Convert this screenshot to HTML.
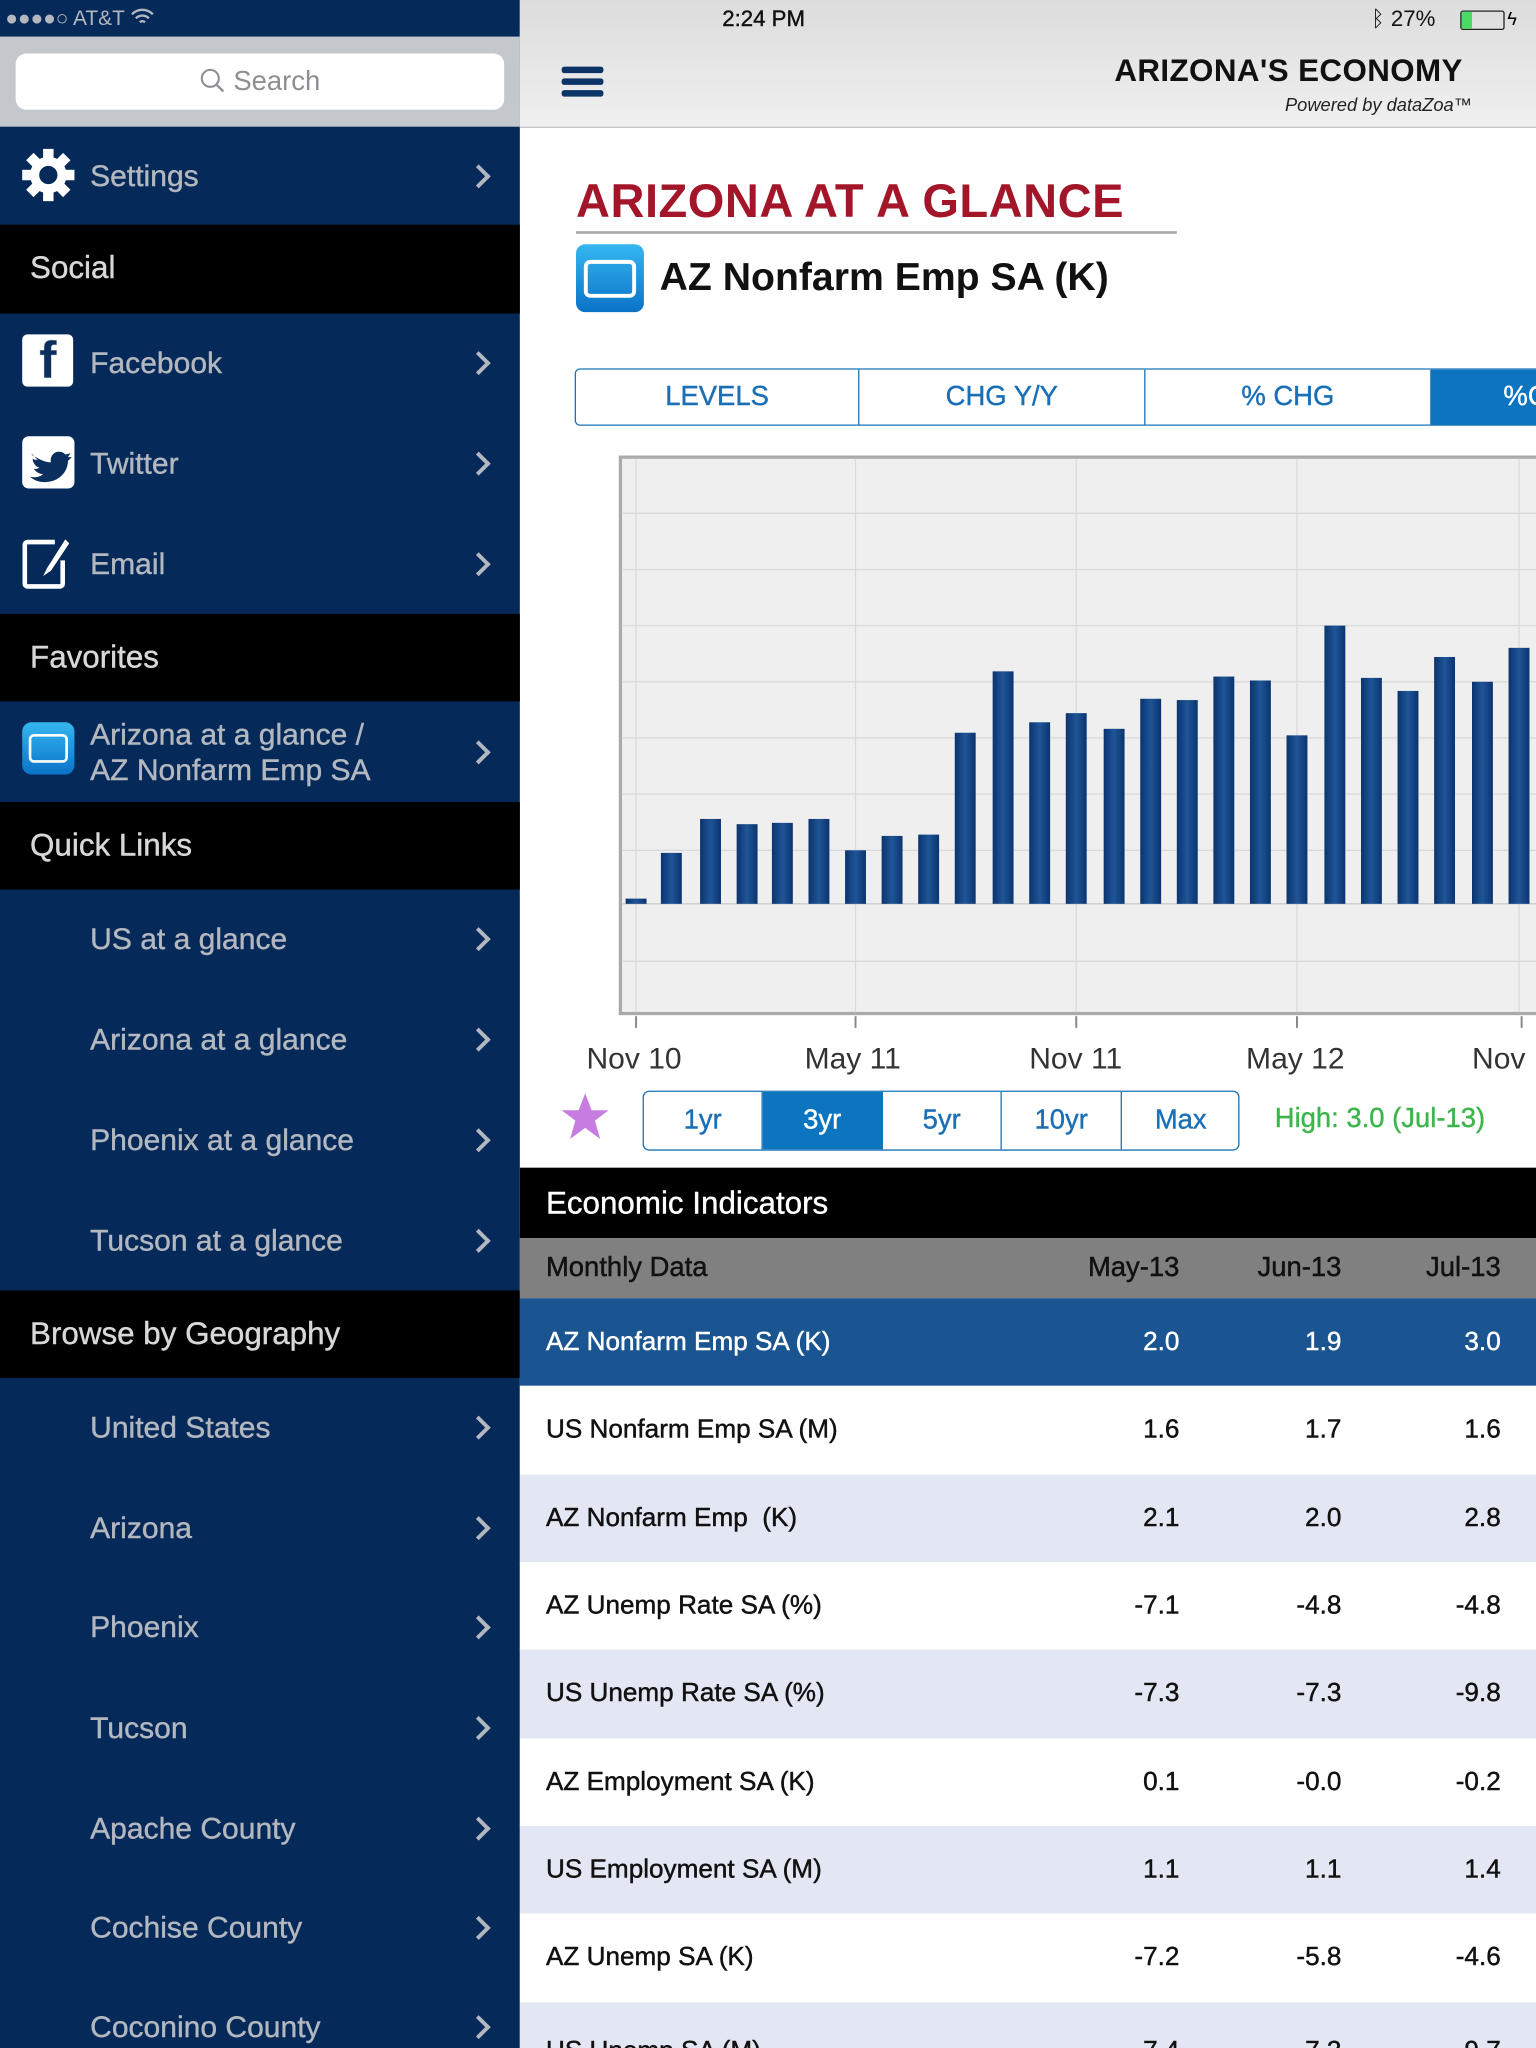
<!DOCTYPE html>
<html><head><meta charset="utf-8"><style>
*{margin:0;padding:0;box-sizing:border-box}
html,body{width:1536px;height:2048px;overflow:hidden;background:#fff}
#w{position:absolute;left:0;top:0;width:1176px;height:1568px;transform:scale(1.306122);transform-origin:0 0;font-family:"Liberation Sans",Arial,sans-serif;overflow:hidden}
.a{position:absolute}
#left{left:0;top:0;width:398px;height:1568px;background:#052a59}
.row{position:absolute;left:0;width:398px;color:#b3b7bf;font-size:23px;-webkit-text-stroke:0.3px #b3b7bf}
.row .t{position:absolute;left:69px;top:50%;transform:translateY(-50%)}
.row .c{position:absolute;left:360px;top:50%;width:13px;height:13px;border-right:3px solid #b3b7bf;border-top:3px solid #b3b7bf;transform:translateY(-50%) rotate(45deg)}
.hd{position:absolute;left:0;width:398px;background:#000;color:#d8d8d8;font-size:24px;-webkit-text-stroke:0.3px #d8d8d8}
.hd span{position:absolute;left:23px;top:50%;transform:translateY(-50%)}
.tr{position:absolute;left:398px;width:778px;height:68px;font-size:20px;color:#111;-webkit-text-stroke:0.35px currentColor}
.tr span{position:absolute;top:50%;transform:translateY(-50%)}
.tr .n{left:20px}.tr .v1{right:273px}.tr .v2{right:149px}.tr .v3{right:27px}
.seg{position:absolute;top:0;height:100%;display:flex;align-items:center;justify-content:center;color:#1a6fb5;font-size:21px;border-right:1.5px solid #1a73b8;-webkit-text-stroke:0.3px currentColor}
</style></head><body><div id="w">
<div id="left" class="a">
 <div class="a" style="left:0;top:0;width:398px;height:28px;color:#b3b7bf;font-size:16px;padding:6px 0 0 4px">●●●●○ AT&amp;T <svg width="18" height="14" viewBox="0 0 18 14" style="vertical-align:-1px"><path d="M1 5a11 11 0 0 1 16 0M4 8a7 7 0 0 1 10 0M7 11a3 3 0 0 1 4 0" fill="none" stroke="#b3b7bf" stroke-width="1.8"/></svg></div>
 <div class="a" style="left:0;top:28px;width:398px;height:69px;background:#c4c7cc"></div>
 <div class="a" style="left:12px;top:41px;width:374px;height:43px;background:#fff;border-radius:8px;color:#8e8e93;font-size:21px;text-align:center;line-height:43px"><svg width="20" height="20" viewBox="0 0 20 20" style="vertical-align:-3px"><circle cx="8" cy="8" r="6.5" fill="none" stroke="#8e8e93" stroke-width="1.6"/><path d="M13 13l5 5" stroke="#8e8e93" stroke-width="1.8"/></svg> Search</div>

 <div class="row" style="top:97px;height:75px"><svg class="a" style="left:16px;top:16px" width="42" height="42" viewBox="0 0 42 42"><g fill="#fff"><circle cx="21" cy="21" r="14"/><rect x="17" y="1" width="8" height="40"/><rect x="1" y="17" width="40" height="8"/><rect x="17" y="1" width="8" height="40" transform="rotate(45 21 21)"/><rect x="17" y="1" width="8" height="40" transform="rotate(-45 21 21)"/></g><circle cx="21" cy="21" r="7" fill="#052a59"/></svg><span class="t">Settings</span><i class="c"></i></div>
 <div class="hd" style="top:172px;height:68px"><span>Social</span></div>
 <div class="row" style="top:240px;height:76px"><div class="a" style="left:17px;top:16px;width:39px;height:40px;background:#fff;border-radius:4px;overflow:hidden"><span class="a" style="left:13px;top:-2px;font:bold 40px 'Liberation Sans';color:#0a2e5e">f</span></div><span class="t">Facebook</span><i class="c"></i></div>
 <div class="row" style="top:316px;height:77px"><div class="a" style="left:17px;top:18px;width:40px;height:40px;background:#fff;border-radius:5px"><svg width="40" height="40" viewBox="0 0 40 40"><path d="M7 14c6 4 11 6 15 6-1-5 3-9 7-8 2 0 3 1 4 2l4-1-2 3 3 0-3 3c0 9-8 17-19 16-4 0-8-2-10-4 4 1 8 0 10-2-3 0-6-2-7-4 2 0 3 0 4-1-3-1-5-4-5-7 1 1 2 1 4 1-3-2-4-5-5-4z" fill="#0a2e5e"/></svg></div><span class="t">Twitter</span><i class="c"></i></div>
 <div class="row" style="top:393px;height:77px"><svg class="a" style="left:16px;top:16px" width="42" height="42" viewBox="0 0 42 42"><path d="M26 6H5a2 2 0 0 0-2 2v30a2 2 0 0 0 2 2h25a2 2 0 0 0 2-2V20" fill="none" stroke="#fff" stroke-width="3.5"/><path d="M34 4l-14 22-3 6 6-4 14-21z" fill="#fff"/></svg><span class="t">Email</span><i class="c"></i></div>
 <div class="hd" style="top:470px;height:67px"><span>Favorites</span></div>
 <div class="row" style="top:537px;height:77px;line-height:27px"><div class="a" style="left:17px;top:16px;width:40px;height:40px;border-radius:7px;background:linear-gradient(#35b7f0,#0a72c8)"><div class="a" style="left:5px;top:9px;width:30px;height:22px;border:2.5px solid #fff;border-radius:4px"></div></div><span class="t">Arizona at a glance /<br>AZ Nonfarm Emp SA</span><i class="c"></i></div>
 <div class="hd" style="top:614px;height:67px"><span>Quick Links</span></div>
 <div class="row" style="top:681px;height:76px"><span class="t">US at a glance</span><i class="c"></i></div>
 <div class="row" style="top:757px;height:77px"><span class="t">Arizona at a glance</span><i class="c"></i></div>
 <div class="row" style="top:834px;height:77px"><span class="t">Phoenix at a glance</span><i class="c"></i></div>
 <div class="row" style="top:911px;height:77px"><span class="t">Tucson at a glance</span><i class="c"></i></div>
 <div class="hd" style="top:988px;height:67px"><span>Browse by Geography</span></div>
 <div class="row" style="top:1055px;height:76px"><span class="t">United States</span><i class="c"></i></div>
 <div class="row" style="top:1131px;height:77px"><span class="t">Arizona</span><i class="c"></i></div>
 <div class="row" style="top:1208px;height:76px"><span class="t">Phoenix</span><i class="c"></i></div>
 <div class="row" style="top:1284px;height:77px"><span class="t">Tucson</span><i class="c"></i></div>
 <div class="row" style="top:1361px;height:77px"><span class="t">Apache County</span><i class="c"></i></div>
 <div class="row" style="top:1438px;height:76px"><span class="t">Cochise County</span><i class="c"></i></div>
 <div class="row" style="top:1514px;height:76px"><span class="t">Coconino County</span><i class="c"></i></div>
</div>

<!-- header -->
<div class="a" style="left:398px;top:0;width:778px;height:98px;background:linear-gradient(#dcdcdc,#f0f0f0);border-bottom:1.5px solid #c4c4c4"></div>
<div class="a" style="left:553px;top:5px;font-size:17px;color:#111;-webkit-text-stroke:0.3px #111">2:24 PM</div>
<div class="a" style="left:1050px;top:5px;font-size:17px;color:#111">ᛒ 27%</div>
<div class="a" style="left:1118px;top:8px;width:34px;height:15px;border:1.5px solid #222;border-radius:2px"><div style="width:8px;height:100%;background:#4cd964"></div></div>
<div class="a" style="left:1154px;top:6px;font-size:14px">ϟ</div>
<div class="a" style="left:430px;top:51px;width:32px;height:5px;background:#0d3466;border-radius:2px"></div>
<div class="a" style="left:430px;top:60px;width:32px;height:5px;background:#0d3466;border-radius:2px"></div>
<div class="a" style="left:430px;top:69px;width:32px;height:5px;background:#0d3466;border-radius:2px"></div>
<div class="a" style="right:56px;top:41px;font-size:24px;font-weight:bold;color:#111;letter-spacing:0.3px">ARIZONA'S ECONOMY</div>
<div class="a" style="right:49px;top:72px;font-size:14px;font-style:italic;color:#222">Powered by dataZoa™</div>

<div class="a" style="left:441px;top:133px;font-size:36px;font-weight:bold;color:#a3162a;letter-spacing:0.4px">ARIZONA AT A GLANCE</div>
<div class="a" style="left:441px;top:177px;width:460px;height:2px;background:#aaa"></div>
<div class="a" style="left:441px;top:187px;width:52px;height:52px;border-radius:7px;background:linear-gradient(#35b7f0,#0a72c8)"><div class="a" style="left:6px;top:12px;width:40px;height:29px;border:3px solid #fff;border-radius:5px"></div></div>
<div class="a" style="left:505px;top:196px;font-size:30px;font-weight:bold;color:#111">AZ Nonfarm Emp SA (K)</div>

<div class="a" style="left:440px;top:282px;width:760px;height:44px;border:1.5px solid #1a73b8;border-radius:4px;overflow:hidden">
 <div class="seg" style="left:0;width:217px">LEVELS</div>
 <div class="seg" style="left:217px;width:219px">CHG Y/Y</div>
 <div class="seg" style="left:436px;width:219px">% CHG</div>
 <div class="seg" style="left:655px;width:120px;background:#0d75c0;color:#fff;justify-content:flex-start;padding-left:55px">%CHG</div>
</div>

<svg class="a" style="left:472px;top:348px" width="704" height="442" viewBox="472 348 704 442">
 <rect x="475" y="350" width="710" height="426" fill="#efefef" stroke="#aaa" stroke-width="2.5"/>
 <g stroke="#dadada" stroke-width="1">
  <line x1="476" y1="393" x2="1176" y2="393"/><line x1="476" y1="436" x2="1176" y2="436"/><line x1="476" y1="479" x2="1176" y2="479"/><line x1="476" y1="522" x2="1176" y2="522"/><line x1="476" y1="565" x2="1176" y2="565"/><line x1="476" y1="608" x2="1176" y2="608"/><line x1="476" y1="651" x2="1176" y2="651"/><line x1="476" y1="736" x2="1176" y2="736"/>
  <line x1="487" y1="351" x2="487" y2="775"/><line x1="655" y1="351" x2="655" y2="775"/><line x1="824" y1="351" x2="824" y2="775"/><line x1="993" y1="351" x2="993" y2="775"/><line x1="1163" y1="351" x2="1163" y2="775"/>
 </g>
 <line x1="476" y1="692" x2="1176" y2="692" stroke="#ccc"/>
 <g stroke="#888" stroke-width="1.5"><line x1="487" y1="778" x2="487" y2="787"/><line x1="655" y1="778" x2="655" y2="787"/><line x1="824" y1="778" x2="824" y2="787"/><line x1="993" y1="778" x2="993" y2="787"/><line x1="1165" y1="778" x2="1165" y2="787"/></g>
 <defs><linearGradient id="b" x1="0" x2="1"><stop offset="0" stop-color="#0a3470"/><stop offset=".5" stop-color="#1f5596"/><stop offset="1" stop-color="#0a3470"/></linearGradient></defs>
 <g fill="url(#b)">
  <rect x="479" y="688" width="16" height="4"/><rect x="506" y="653" width="16" height="39"/><rect x="536" y="627" width="16" height="65"/><rect x="564" y="631" width="16" height="61"/><rect x="591" y="630" width="16" height="62"/><rect x="619" y="627" width="16" height="65"/><rect x="647" y="651" width="16" height="41"/><rect x="675" y="640" width="16" height="52"/><rect x="703" y="639" width="16" height="53"/><rect x="731" y="561" width="16" height="131"/><rect x="760" y="514" width="16" height="178"/><rect x="788" y="553" width="16" height="139"/><rect x="816" y="546" width="16" height="146"/><rect x="845" y="558" width="16" height="134"/><rect x="873" y="535" width="16" height="157"/><rect x="901" y="536" width="16" height="156"/><rect x="929" y="518" width="16" height="174"/><rect x="957" y="521" width="16" height="171"/><rect x="985" y="563" width="16" height="129"/><rect x="1014" y="479" width="16" height="213"/><rect x="1042" y="519" width="16" height="173"/><rect x="1070" y="529" width="16" height="163"/><rect x="1098" y="503" width="16" height="189"/><rect x="1127" y="522" width="16" height="170"/><rect x="1155" y="496" width="16" height="196"/>
 </g>
</svg>
<div class="a" style="left:449px;top:797px;font-size:23px;color:#333">Nov 10</div>
<div class="a" style="left:616px;top:797px;font-size:23px;color:#333">May 11</div>
<div class="a" style="left:788px;top:797px;font-size:23px;color:#333">Nov 11</div>
<div class="a" style="left:954px;top:797px;font-size:23px;color:#333">May 12</div>
<div class="a" style="left:1127px;top:797px;font-size:23px;color:#333">Nov</div>

<svg class="a" style="left:428px;top:836px" width="40" height="40" viewBox="0 0 40 40"><path d="M20 1l5 13h13l-10.5 8 4 14L20 27.5 8.5 36l4-14L2 14h13z" fill="#c77de0"/></svg>
<div class="a" style="left:492px;top:835px;width:457px;height:46px;border:1.5px solid #1a73b8;border-radius:5px;overflow:hidden">
 <div class="seg" style="left:0;width:91px">1yr</div>
 <div class="seg" style="left:91px;width:92px;background:#0d75c0;color:#fff">3yr</div>
 <div class="seg" style="left:183px;width:91px">5yr</div>
 <div class="seg" style="left:274px;width:92px">10yr</div>
 <div class="seg" style="left:366px;width:90px;border-right:none">Max</div>
</div>
<div class="a" style="left:976px;top:845px;font-size:21px;color:#3cb54a;-webkit-text-stroke:0.3px #3cb54a">High: 3.0 (Jul-13)</div>

<div class="a" style="left:398px;top:894px;width:778px;height:54px;background:#000;color:#fff;font-size:24px;padding:14px 0 0 20px;-webkit-text-stroke:0.3px #fff">Economic Indicators</div>
<div class="tr" style="top:948px;height:46px;background:#808080;font-size:21px"><span class="n">Monthly Data</span><span class="v1">May-13</span><span class="v2">Jun-13</span><span class="v3">Jul-13</span></div>
<div class="tr" style="top:994px;height:67px;background:#1b5591;color:#fff"><span class="n">AZ Nonfarm Emp SA (K)</span><span class="v1">2.0</span><span class="v2">1.9</span><span class="v3">3.0</span></div>
<div class="tr" style="top:1061px;background:#fff"><span class="n">US Nonfarm Emp SA (M)</span><span class="v1">1.6</span><span class="v2">1.7</span><span class="v3">1.6</span></div>
<div class="tr" style="top:1129px;background:#e3e6f3"><span class="n">AZ Nonfarm Emp &nbsp;(K)</span><span class="v1">2.1</span><span class="v2">2.0</span><span class="v3">2.8</span></div>
<div class="tr" style="top:1196px;background:#fff"><span class="n">AZ Unemp Rate SA (%)</span><span class="v1">-7.1</span><span class="v2">-4.8</span><span class="v3">-4.8</span></div>
<div class="tr" style="top:1263px;background:#e3e6f3"><span class="n">US Unemp Rate SA (%)</span><span class="v1">-7.3</span><span class="v2">-7.3</span><span class="v3">-9.8</span></div>
<div class="tr" style="top:1331px;background:#fff"><span class="n">AZ Employment SA (K)</span><span class="v1">0.1</span><span class="v2">-0.0</span><span class="v3">-0.2</span></div>
<div class="tr" style="top:1398px;background:#e3e6f3"><span class="n">US Employment SA (M)</span><span class="v1">1.1</span><span class="v2">1.1</span><span class="v3">1.4</span></div>
<div class="tr" style="top:1465px;background:#fff"><span class="n">AZ Unemp SA (K)</span><span class="v1">-7.2</span><span class="v2">-5.8</span><span class="v3">-4.6</span></div>
<div class="tr" style="top:1533px;background:#e3e6f3"><span class="n" style="top:38px">US Unemp SA (M)</span><span class="v1" style="top:38px">-7.4</span><span class="v2" style="top:38px">-7.3</span><span class="v3" style="top:38px">-9.7</span></div>
</div></body></html>
